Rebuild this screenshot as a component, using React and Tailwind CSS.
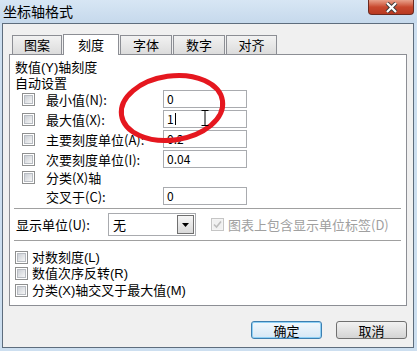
import React from 'react';

const font = { fontFamily: '"Noto Sans CJK SC", "Liberation Sans", sans-serif' };
const tight = { fontFamily: '"Liberation Sans", "Noto Sans CJK SC", sans-serif' };

function Check({ checked, disabled }) {
  return (
    <span
      className={`w-[13px] h-[13px] shrink-0 border flex items-center justify-center ${
        disabled ? 'border-[#c5c5c5] bg-[#f4f4f4]' : 'border-[#8e8f8f] bg-white'
      }`}
    >
      <span
        className={`w-[9px] h-[9px] flex items-center justify-center ${
          disabled ? 'bg-[#f0f0f0]' : 'bg-gradient-to-br from-[#cbcfd5] to-[#f6f6f6] border border-[#b8bcc2]'
        }`}
      >
        {checked && (
          <svg width="9" height="9" viewBox="0 0 9 9">
            <path d="M1 4.5 L3.5 7 L8 1.5" fill="none" stroke="#bdbdbd" strokeWidth="1.6" />
          </svg>
        )}
      </span>
    </span>
  );
}

function Tab({ label, active, w }) {
  if (active) {
    return (
      <div
        className={`${w} h-[21px] -mb-px bg-white border border-b-0 border-[#8c8e94] flex items-center justify-center text-[13px] text-black z-10`}
      >
        {label}
      </div>
    );
  }
  return (
    <div
      className={`${w} h-[19px] border border-b-0 border-[#8c8e94] bg-gradient-to-b from-[#f2f2f2] to-[#dcdcdc] flex items-center justify-center text-[13px] text-black`}
    >
      {label}
    </div>
  );
}

function ValueRow({ label, value, caret }) {
  return (
    <div className="h-[20px] flex items-center">
      <div className="pl-[12px] w-[36px]">
        <Check />
      </div>
      <span className="w-[117px] text-[13px] text-black leading-none">{label}</span>
      <div className="w-[84px] h-[18px] border border-[#a9abaf] bg-white flex items-center px-[3px] text-[12px] text-black">
        {value}
        {caret && <span className="w-px h-[12px] bg-black ml-[1px]" />}
      </div>
    </div>
  );
}

export default function App() {
  return (
    <div className="w-[417px] h-[351px] relative overflow-hidden bg-[#cddff0]" style={font}>
      {/* title bar */}
      <div className="h-[23px] flex items-start justify-between bg-gradient-to-b from-[#d7e6f4] to-[#c6d9ec]">
        <span className="pl-[3px] pt-[3px] text-[14px] leading-[16px] text-black">坐标轴格式</span>
        <div className="mr-[3px] w-[46px] h-[15px] rounded-b-[4px] border border-t-0 border-[#6b2a20] bg-gradient-to-b from-[#e8a08a] via-[#c8482e] to-[#b83a22] flex items-center justify-center">
          <svg width="13" height="11" viewBox="0 0 13 11">
            <path d="M2 1 L11 10 M11 1 L2 10" stroke="#3b3b3b" strokeWidth="4" />
            <path d="M2 1 L11 10 M11 1 L2 10" stroke="#ffffff" strokeWidth="2.2" />
          </svg>
        </div>
      </div>

      {/* window body */}
      <div className="ml-[2px] w-[412px] h-[325px] border border-[#5e6d7d] bg-[#f0f0f0] flex flex-col">
        {/* tabs */}
        <div className="pl-[9px] pt-[9px] flex items-end h-[30px] gap-[1px]">
          <Tab label="图案" w="w-[50px]" />
          <Tab label="刻度" w="w-[56px]" active />
          <Tab label="字体" w="w-[52px]" />
          <Tab label="数字" w="w-[52px]" />
          <Tab label="对齐" w="w-[51px]" />
        </div>

        {/* tab panel */}
        <div className="ml-[6px] w-[398px] h-[252px] border border-[#8c8e94] bg-white flex flex-col">
          <div className="pt-[4px] pl-[5px] h-[20px] flex items-center text-[13px] leading-none text-black" style={tight}>数值(Y)轴刻度</div>
          <div className="pl-[5px] h-[16px] flex items-center text-[13px] leading-none text-black" style={tight}>自动设置</div>
          <div className="mt-[-2px]">
            <ValueRow label="最小值(N):" value="0" />
            <ValueRow label="最大值(X):" value="1" caret />
            <ValueRow label="主要刻度单位(A):" value="0.2" />
            <ValueRow label="次要刻度单位(I):" value="0.04" />
          </div>
          <div className="h-[17px] flex items-center">
            <div className="pl-[12px] w-[36px]">
              <Check />
            </div>
            <span className="text-[13px] text-black leading-none">分类(X)轴</span>
          </div>
          <div className="h-[20px] flex items-center">
            <span className="pl-[36px] w-[153px] text-[13px] text-black leading-none">交叉于(C):</span>
            <div className="w-[84px] h-[18px] border border-[#a9abaf] bg-white flex items-center px-[3px] text-[12px] text-black">
              0
            </div>
          </div>

          <div className="mt-[2px] ml-[4px] w-[387px] h-px bg-[#a0a0a0]" />

          <div className="h-[31px] flex items-center">
            <span className="pl-[6px] w-[98px] text-[13px] text-black leading-none">显示单位(U):</span>
            <div className="w-[88px] h-[23px] border border-[#a9abaf] bg-white flex items-center justify-between pl-[4px] pr-[1px]">
              <span className="text-[13px] text-black leading-none">无</span>
              <div className="w-[17px] h-[19px] border border-[#707070] bg-gradient-to-b from-[#f6f6f6] to-[#d9d9d9] flex items-center justify-center">
                <svg width="7" height="4" viewBox="0 0 7 4">
                  <path d="M0 0 L7 0 L3.5 4 Z" fill="#000" />
                </svg>
              </div>
            </div>
            <div className="ml-[15px] flex items-center gap-[4px]">
              <Check checked disabled />
              <span className="text-[13px] text-[#a0a0a0] leading-none">图表上包含显示单位标签(D)</span>
            </div>
          </div>

          <div className="ml-[4px] w-[387px] h-px bg-[#a0a0a0]" />

          <div className="pt-[8px] pl-[5px] flex flex-col">
            {['对数刻度(L)', '数值次序反转(R)', '分类(X)轴交叉于最大值(M)'].map((t) => (
              <div key={t} className="h-[16.5px] flex items-center gap-[4px]">
                <Check />
                <span className="text-[13px] text-black leading-none" style={tight}>{t}</span>
              </div>
            ))}
          </div>
        </div>

        {/* buttons */}
        <div className="mt-[15px] flex justify-end gap-[14px] pr-[6px]">
          <button className="w-[71px] h-[18px] rounded-[3px] border border-[#3c7fb1] bg-gradient-to-b from-[#f2f8fd] to-[#d6e7f5] shadow-[inset_0_0_0_1px_#8fd0f5] text-[13px] leading-none text-black">
            确定
          </button>
          <button className="w-[71px] h-[18px] rounded-[3px] border border-[#707070] bg-gradient-to-b from-[#f2f2f2] to-[#d4d4d4] text-[13px] leading-none text-black">
            取消
          </button>
        </div>
      </div>

      {/* annotation: red ellipse */}
      <svg className="absolute left-[115px] top-[70px] pointer-events-none" width="115" height="76" viewBox="0 0 115 76">
        <ellipse cx="57" cy="38" rx="51" ry="32" transform="rotate(-8 57 38)" fill="none" stroke="#e5171f" strokeWidth="5" />
      </svg>

      {/* I-beam cursor */}
      <svg className="absolute left-[201px] top-[110px] pointer-events-none" width="8" height="16" viewBox="0 0 8 16">
        <path d="M0.5 0.5 H7.5 M4 0.5 V15.5 M0.5 15.5 H7.5" stroke="#000" strokeWidth="1" fill="none" />
      </svg>
    </div>
  );
}
